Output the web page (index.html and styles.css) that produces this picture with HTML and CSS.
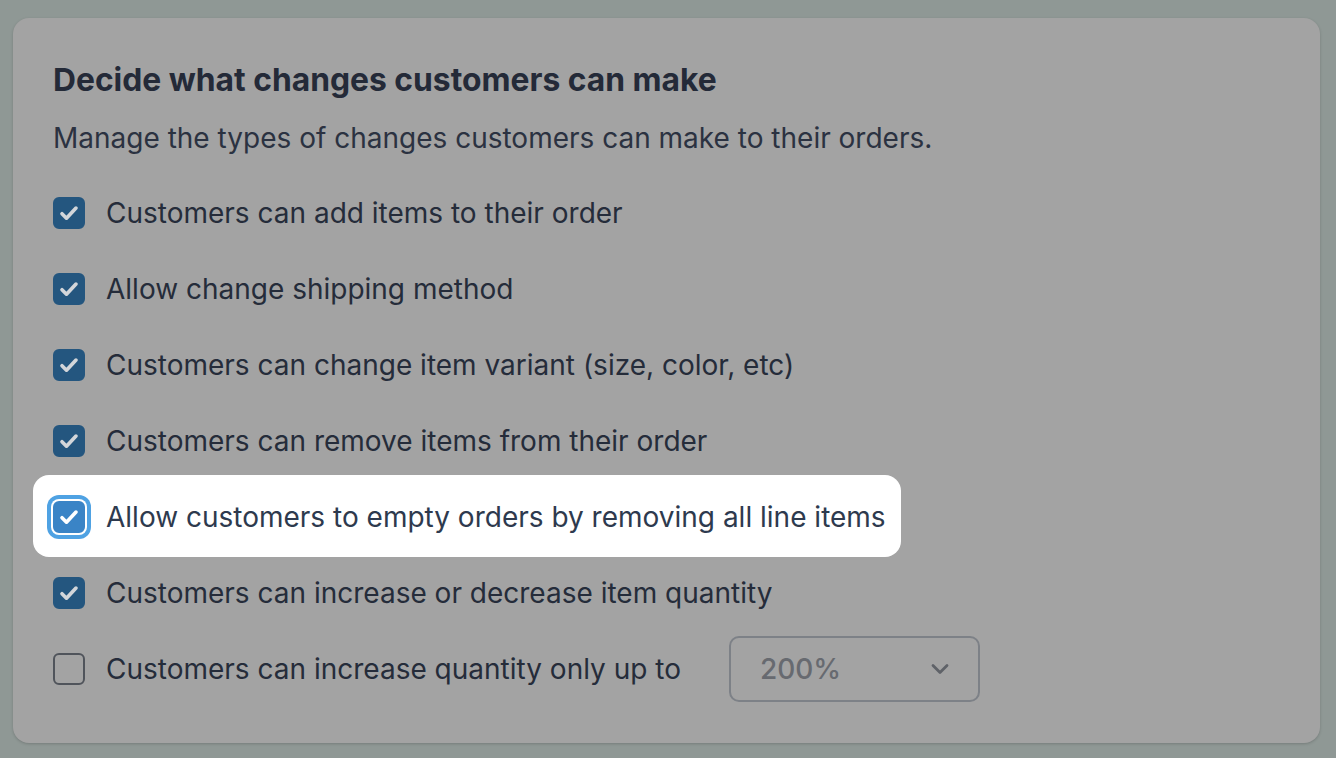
FILE: index.html
```html
<!DOCTYPE html>
<html lang="en">

<head>
    <meta charset="UTF-8" />
    <meta name="viewport" content="width=device-width, initial-scale=1.0" />
    <title>Order editing</title>
    <link rel="stylesheet" href="styles.css">
</head>

<body>
    <div class="tarjeta">
        <h2>Decide what changes customers can make</h2>
        <p class="sub">Manage the types of changes customers can make to their orders.</p>
        <ul class="lista">
            <li class="fila">
                <span class="caja marcada"><svg viewBox="0 0 20 20"><path d="M5 10.5l3.2 3.2 6.8-7.2" /></svg></span>
                <span>Customers can add items to their order</span>
            </li>
            <li class="fila">
                <span class="caja marcada"><svg viewBox="0 0 20 20"><path d="M5 10.5l3.2 3.2 6.8-7.2" /></svg></span>
                <span>Allow change shipping method</span>
            </li>
            <li class="fila">
                <span class="caja marcada"><svg viewBox="0 0 20 20"><path d="M5 10.5l3.2 3.2 6.8-7.2" /></svg></span>
                <span>Customers can change item variant (size, color, etc)</span>
            </li>
            <li class="fila">
                <span class="caja marcada"><svg viewBox="0 0 20 20"><path d="M5 10.5l3.2 3.2 6.8-7.2" /></svg></span>
                <span>Customers can remove items from their order</span>
            </li>
            <li class="fila">
                <div class="foco">
                    <span class="caja marcada activa"><svg viewBox="0 0 20 20"><path d="M5 10.5l3.2 3.2 6.8-7.2" /></svg></span>
                    <span>Allow customers to empty orders by removing all line items</span>
                </div>
            </li>
            <li class="fila">
                <span class="caja marcada"><svg viewBox="0 0 20 20"><path d="M5 10.5l3.2 3.2 6.8-7.2" /></svg></span>
                <span>Customers can increase or decrease item quantity</span>
            </li>
            <li class="fila">
                <span class="caja"></span>
                <span>Customers can increase quantity only up to</span>
                <div class="selector">
                    <span>200%</span>
                    <svg viewBox="0 0 20 20"><path d="M5 7.5l5 5 5-5" /></svg>
                </div>
            </li>
        </ul>
    </div>
</body>

</html>
```

FILE: styles.css
```css
* {
    box-sizing: border-box;
    margin: 0;
    padding: 0;
}

body {
    background-color: #8f9895;
    font-family: Inter, "Noto Sans", sans-serif;
    color: #252c3a;
    padding: 18px 16px 15px 13px;
}

.tarjeta {
    background-color: #a3a3a3;
    border-radius: 16px;
    box-shadow: 0 1px 3px rgba(0, 0, 0, 0.18);
    padding: 43px 40px 36px 40px;
}

h2 {
    font-size: 31.8px;
    line-height: 38px;
    font-weight: 700;
    color: #242a38;
}

.sub {
    margin-top: 22px;
    font-size: 28px;
    line-height: 34px;
    color: #2b3241;
}

.lista {
    list-style: none;
    margin-top: 20px;
}

.fila {
    display: flex;
    align-items: center;
    height: 76px;
    font-size: 28px;
    gap: 21px;
}

.foco {
    display: flex;
    align-items: center;
    gap: 21px;
    background-color: #fff;
    border-radius: 16px;
    color: #2e3a4e;
    margin: -4px -15px -2px -20px;
    padding: 4px 15px 2px 20px;
    height: 82px;
}

.caja {
    flex: none;
    width: 32px;
    height: 32px;
    border: 2px solid #50545b;
    border-radius: 6px;
    display: flex;
    align-items: center;
    justify-content: center;
}

.caja svg {
    width: 30px;
    height: 30px;
    fill: none;
    stroke: #d3d6da;
    stroke-width: 2.6;
    stroke-linecap: round;
    stroke-linejoin: round;
}

.marcada {
    background-color: #24567f;
    border-color: #24567f;
}

.activa {
    background-color: #3a84c6;
    border-color: #3a84c6;
    box-shadow: 0 0 0 2px #fff, 0 0 0 6px #4fa2e3;
}

.activa svg {
    stroke: #fff;
}

.selector {
    margin-left: 27px;
    width: 251px;
    height: 66px;
    border: 2px solid #7d8187;
    border-radius: 10px;
    display: flex;
    align-items: center;
    justify-content: space-between;
    padding: 0 24px 0 29px;
    color: #676a70;
    font-weight: 500;
}

.selector svg {
    width: 28px;
    height: 28px;
    fill: none;
    stroke: #5f6268;
    stroke-width: 2;
    stroke-linecap: round;
    stroke-linejoin: round;
}
```
